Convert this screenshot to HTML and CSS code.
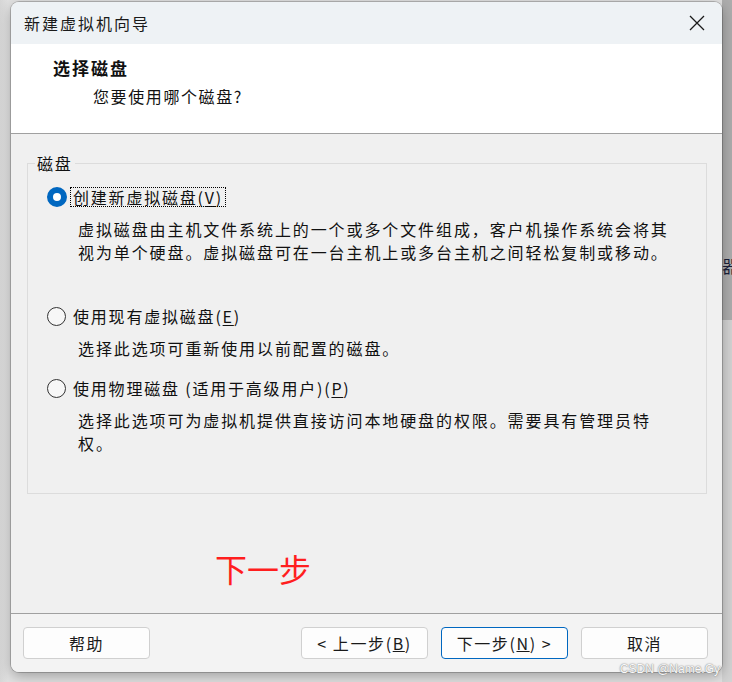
FILE: index.html
```html
<!DOCTYPE html>
<html lang="zh-CN">
<head>
  <meta charset="UTF-8">
  <title>新建虚拟机向导</title>
  <link rel="stylesheet" href="styles.css">
</head>
<body>
  <div class="screen">
    <div class="dialog">
      <div class="titlebar">
        <span class="title">新建虚拟机向导</span>
        <button class="close" aria-label="关闭">
          <svg viewBox="0 0 16 16" width="16" height="16">
            <path d="M1 1L15 15M15 1L1 15"/>
          </svg>
        </button>
      </div>

      <div class="header">
        <h1>选择磁盘</h1>
        <p>您要使用哪个磁盘?</p>
      </div>

      <div class="content">
        <fieldset class="group">
          <legend>磁盘</legend>

          <div class="option opt-create">
            <label class="opt-label">
              <span class="radio checked"></span>
              <span class="focus">创建新虚拟磁盘(<u>V</u>)</span>
            </label>
            <p class="desc">虚拟磁盘由主机文件系统上的一个或多个文件组成，客户机操作系统会将其<br>视为单个硬盘。虚拟磁盘可在一台主机上或多台主机之间轻松复制或移动。</p>
          </div>

          <div class="option opt-existing">
            <label class="opt-label">
              <span class="radio"></span>
              <span>使用现有虚拟磁盘(<u>E</u>)</span>
            </label>
            <p class="desc">选择此选项可重新使用以前配置的磁盘。</p>
          </div>

          <div class="option opt-physical">
            <label class="opt-label">
              <span class="radio"></span>
              <span>使用物理磁盘 (适用于高级用户)(<u>P</u>)</span>
            </label>
            <p class="desc">选择此选项可为虚拟机提供直接访问本地硬盘的权限。需要具有管理员特<br>权。</p>
          </div>
        </fieldset>

        <div class="annotation">下一步</div>
      </div>

      <div class="footer">
        <button class="btn btn-help">帮助</button>
        <button class="btn">&lt; 上一步(<u>B</u>)</button>
        <button class="btn btn-primary">下一步(<u>N</u>) &gt;</button>
        <button class="btn">取消</button>
      </div>
    </div>

    <div class="behind"><span>器</span></div>

    <div class="watermark">CSDN @Name.Gy</div>
  </div>
</body>
</html>
```

FILE: styles.css
```css
* {
  box-sizing: border-box;
}
body {
  margin: 0;
  font-family: "Noto Sans CJK SC", "Liberation Sans", sans-serif;
  color: #111;
}
.screen {
  position: relative;
  display: flex;
  height: 682px;
  padding: 2px 0 0 11px;
  background: linear-gradient(90deg, #d6d6d6, #e2e2e2 8px);
  overflow: hidden;
}
.dialog {
  position: relative;
  z-index: 1;
  flex: none;
  width: 711px;
  height: 670px;
  display: flex;
  flex-direction: column;
  background: #f0f0f0;
  border-radius: 8px;
  overflow: hidden;
  box-shadow: 0 0 0 1px rgba(0, 0, 0, 0.2), 0 4px 14px rgba(0, 0, 0, 0.3);
}
.titlebar {
  height: 42px;
  flex: none;
  display: flex;
  align-items: center;
  justify-content: space-between;
  padding: 0 17px 0 13px;
  background: #eef2f5;
}
.title {
  font-size: 16px;
  letter-spacing: 2px;
  color: #1a1a1a;
}
.close {
  border: none;
  background: none;
  padding: 0;
  width: 16px;
  height: 16px;
  display: flex;
}
.close svg {
  stroke: #1a1a1a;
  stroke-width: 1.3;
  fill: none;
}
.header {
  height: 90px;
  flex: none;
  background: #fff;
  border-bottom: 1px solid #a0a0a0;
  padding: 14px 0 0 42px;
}
.header h1 {
  margin: 0;
  font-size: 17px;
  font-weight: 700;
  line-height: 20px;
  letter-spacing: 2px;
}
.header p {
  margin: 8px 0 0 40px;
  font-size: 16px;
  line-height: 20px;
  letter-spacing: 1.6px;
}
.content {
  flex: 1;
  padding: 18px 15px 0 16px;
}
.group {
  margin: 0;
  min-width: 0;
  height: 342px;
  padding: 13px 19px 0;
  border: 1px solid #dcdcdc;
}
.group legend {
  margin-left: -12px;
  padding: 0 2px;
  font-size: 16px;
  line-height: 22px;
  letter-spacing: 1.8px;
}
.opt-label {
  display: flex;
  align-items: center;
  height: 20px;
  font-size: 16px;
  letter-spacing: 1.8px;
}
.radio {
  flex: none;
  width: 19px;
  height: 19px;
  margin-right: 7px;
  border: 1px solid #333;
  border-radius: 50%;
  background: #f7f7f7;
}
.radio.checked {
  width: 20px;
  height: 20px;
  margin-right: 4px;
  border: 6px solid #0067c0;
  background: #fff;
}
.focus {
  padding: 0 2px;
  line-height: 18px;
  outline: 1px dotted #000;
}
.opt-label u {
  text-underline-offset: 2px;
}
.desc {
  margin: 11px 0 0 31px;
  font-size: 16px;
  line-height: 23px;
  letter-spacing: 1.9px;
  white-space: nowrap;
}
.opt-create {
  margin-bottom: 42px;
}
.opt-existing {
  margin-bottom: 18px;
}
.annotation {
  margin: 54px 0 0 188px;
  font-size: 32px;
  line-height: 40px;
  color: #ff1e1e;
}
.footer {
  height: 59px;
  flex: none;
  display: flex;
  align-items: center;
  gap: 13px;
  padding: 0 14px 0 12px;
  border-top: 1px solid #a0a0a0;
  background: #f3f3f3;
}
.btn {
  width: 127px;
  height: 32px;
  padding: 0;
  border: 1px solid #d0d0d0;
  border-radius: 4px;
  background: #fdfdfd;
  font-family: "Noto Sans CJK SC", "Liberation Sans", sans-serif;
  font-size: 16px;
  letter-spacing: 1.6px;
  color: #1a1a1a;
}
.btn-help {
  margin-right: auto;
}
.btn-primary {
  border-color: #0067c0;
}
.behind {
  flex: 1;
  margin-top: -2px;
  overflow: hidden;
  white-space: nowrap;
  background: linear-gradient(#adadad 0 320px, #d3d3d3 320px);
}
.behind span {
  display: block;
  padding-top: 253px;
  font-size: 17px;
  color: #1b1f3a;
}
.watermark {
  position: absolute;
  z-index: 2;
  right: 12px;
  bottom: 6px;
  font-family: "Liberation Sans", sans-serif;
  font-size: 12px;
  color: #fafafa;
  text-shadow: 0 0 1px #777, 0 0 2px #999;
}
```
